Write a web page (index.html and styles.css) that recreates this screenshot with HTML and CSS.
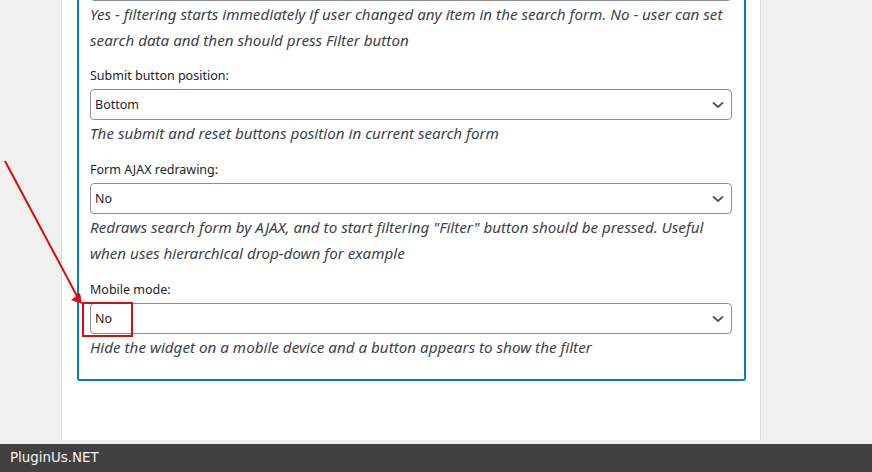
FILE: index.html
```html
<!DOCTYPE html>
<html lang="en">
<head>
<meta charset="utf-8">
<title>Widget settings</title>
<link rel="stylesheet" href="styles.css">
</head>
<body>
<div class="panel">
  <div class="box">
    <div class="select select-top"></div>
    <p class="desc">Yes - filtering starts immediately if user changed any item in the search form. No - user can set search data and then should press Filter button</p>

    <div class="field field-first">
      <label class="label">Submit button position:</label>
      <div class="select"><span>Bottom</span><svg class="chev" width="12" height="8" viewBox="0 0 12 8"><path d="M1 1.5 L6 6 L11 1.5" fill="none" stroke="#50575e" stroke-width="1.8"/></svg></div>
      <p class="desc">The submit and reset buttons position in current search form</p>
    </div>

    <div class="field">
      <label class="label">Form AJAX redrawing:</label>
      <div class="select"><span>No</span><svg class="chev" width="12" height="8" viewBox="0 0 12 8"><path d="M1 1.5 L6 6 L11 1.5" fill="none" stroke="#50575e" stroke-width="1.8"/></svg></div>
      <p class="desc">Redraws search form by AJAX, and to start filtering "Filter" button should be pressed. Useful when uses hierarchical drop-down for example</p>
    </div>

    <div class="field">
      <label class="label">Mobile mode:</label>
      <div class="select highlighted"><span>No</span><svg class="chev" width="12" height="8" viewBox="0 0 12 8"><path d="M1 1.5 L6 6 L11 1.5" fill="none" stroke="#50575e" stroke-width="1.8"/></svg><span class="mark"></span></div>
      <p class="desc">Hide the widget on a mobile device and a button appears to show the filter</p>
    </div>
  </div>
</div>

<svg class="arrow" width="100" height="320" viewBox="0 0 100 320">
  <line x1="5" y1="161" x2="77" y2="296" stroke="#d40f0f" stroke-width="2"/>
  <polygon points="82,304 71,300 80,293" fill="#d40f0f"/>
</svg>

<footer class="footer">PluginUs.NET</footer>
</body>
</html>
```

FILE: styles.css
```css
html, body {
  margin: 0;
  padding: 0;
}

body {
  background: #f0f0f0;
  font-family: "Noto Sans", "Open Sans", sans-serif;
  color: #3c434a;
  overflow: hidden;
  height: 472px;
  position: relative;
}

.panel {
  margin-left: 61px;
  width: 700px;
  box-sizing: border-box;
  height: 472px;
  background: #fff;
  border-left: 1px solid #dcdcde;
  border-right: 1px solid #dcdcde;
  padding: 0 14px 0 15px;
}

.box {
  margin-top: -32px;
  border: 2px solid #0a7bbd;
  border-radius: 3px;
  padding: 0 12px 19px 11px;
}

.field {
  margin-top: 15px;
}

.field-first {
  margin-top: 14px;
}

.label {
  display: block;
  font-size: 12.5px;
  line-height: 18px;
  margin-bottom: 4px;
  color: #1d2327;
}

.select {
  position: relative;
  height: 31px;
  box-sizing: border-box;
  border: 1px solid #8c8f94;
  border-radius: 4px;
  background: #fff;
  display: flex;
  align-items: center;
  justify-content: space-between;
  padding: 0 7px 0 4px;
  font-size: 12.5px;
  color: #1d2327;
}

.chev {
  display: block;
}

.desc {
  margin: 0;
  font-style: italic;
  font-size: 15.2px;
  line-height: 26px;
  color: #3c434a;
}

.mark {
  position: absolute;
  left: -9px;
  top: -2px;
  width: 51px;
  height: 35px;
  box-sizing: border-box;
  border: 2px solid #d40f0f;
}

.arrow {
  position: absolute;
  left: 0;
  top: 0;
  pointer-events: none;
}

.footer {
  position: fixed;
  left: 0;
  right: 0;
  bottom: 0;
  height: 28px;
  background: #414141;
  color: #f4f4f4;
  font-family: "DejaVu Sans", sans-serif;
  font-size: 13.4px;
  line-height: 28px;
  padding-left: 10px;
}
```
